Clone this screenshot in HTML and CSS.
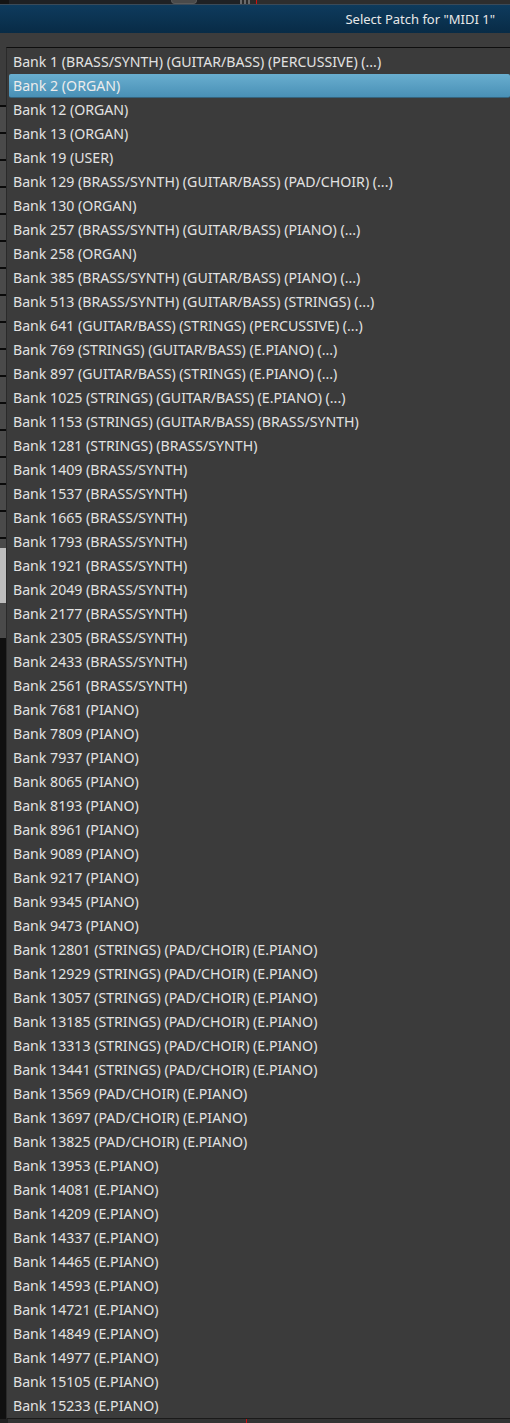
FILE: index.html
```html
<!DOCTYPE html>
<html>
<head>
<meta charset="utf-8">
<link rel="stylesheet" href="styles.css">
</head>
<body>
<div class="topstrip">
  <div class="ts-left"></div>
  <div class="ts-pill"></div>
  <div class="ts-mid"></div>
  <div class="ts-lines"><span></span><span></span><span></span></div>
  <div class="ts-red"></div>
  <div class="ts-right"></div>
</div>
<div class="titlebar"><span class="title">Select Patch for "MIDI 1"</span></div>
<div class="workspace">
  <div class="tracks"></div>
  <div class="menu">
    <div class="item">Bank 1 (BRASS/SYNTH) (GUITAR/BASS) (PERCUSSIVE) (...)</div>
    <div class="item active">Bank 2 (ORGAN)</div>
    <div class="item">Bank 12 (ORGAN)</div>
    <div class="item">Bank 13 (ORGAN)</div>
    <div class="item">Bank 19 (USER)</div>
    <div class="item">Bank 129 (BRASS/SYNTH) (GUITAR/BASS) (PAD/CHOIR) (...)</div>
    <div class="item">Bank 130 (ORGAN)</div>
    <div class="item">Bank 257 (BRASS/SYNTH) (GUITAR/BASS) (PIANO) (...)</div>
    <div class="item">Bank 258 (ORGAN)</div>
    <div class="item">Bank 385 (BRASS/SYNTH) (GUITAR/BASS) (PIANO) (...)</div>
    <div class="item">Bank 513 (BRASS/SYNTH) (GUITAR/BASS) (STRINGS) (...)</div>
    <div class="item">Bank 641 (GUITAR/BASS) (STRINGS) (PERCUSSIVE) (...)</div>
    <div class="item">Bank 769 (STRINGS) (GUITAR/BASS) (E.PIANO) (...)</div>
    <div class="item">Bank 897 (GUITAR/BASS) (STRINGS) (E.PIANO) (...)</div>
    <div class="item">Bank 1025 (STRINGS) (GUITAR/BASS) (E.PIANO) (...)</div>
    <div class="item">Bank 1153 (STRINGS) (GUITAR/BASS) (BRASS/SYNTH)</div>
    <div class="item">Bank 1281 (STRINGS) (BRASS/SYNTH)</div>
    <div class="item">Bank 1409 (BRASS/SYNTH)</div>
    <div class="item">Bank 1537 (BRASS/SYNTH)</div>
    <div class="item">Bank 1665 (BRASS/SYNTH)</div>
    <div class="item">Bank 1793 (BRASS/SYNTH)</div>
    <div class="item">Bank 1921 (BRASS/SYNTH)</div>
    <div class="item">Bank 2049 (BRASS/SYNTH)</div>
    <div class="item">Bank 2177 (BRASS/SYNTH)</div>
    <div class="item">Bank 2305 (BRASS/SYNTH)</div>
    <div class="item">Bank 2433 (BRASS/SYNTH)</div>
    <div class="item">Bank 2561 (BRASS/SYNTH)</div>
    <div class="item">Bank 7681 (PIANO)</div>
    <div class="item">Bank 7809 (PIANO)</div>
    <div class="item">Bank 7937 (PIANO)</div>
    <div class="item">Bank 8065 (PIANO)</div>
    <div class="item">Bank 8193 (PIANO)</div>
    <div class="item">Bank 8961 (PIANO)</div>
    <div class="item">Bank 9089 (PIANO)</div>
    <div class="item">Bank 9217 (PIANO)</div>
    <div class="item">Bank 9345 (PIANO)</div>
    <div class="item">Bank 9473 (PIANO)</div>
    <div class="item">Bank 12801 (STRINGS) (PAD/CHOIR) (E.PIANO)</div>
    <div class="item">Bank 12929 (STRINGS) (PAD/CHOIR) (E.PIANO)</div>
    <div class="item">Bank 13057 (STRINGS) (PAD/CHOIR) (E.PIANO)</div>
    <div class="item">Bank 13185 (STRINGS) (PAD/CHOIR) (E.PIANO)</div>
    <div class="item">Bank 13313 (STRINGS) (PAD/CHOIR) (E.PIANO)</div>
    <div class="item">Bank 13441 (STRINGS) (PAD/CHOIR) (E.PIANO)</div>
    <div class="item">Bank 13569 (PAD/CHOIR) (E.PIANO)</div>
    <div class="item">Bank 13697 (PAD/CHOIR) (E.PIANO)</div>
    <div class="item">Bank 13825 (PAD/CHOIR) (E.PIANO)</div>
    <div class="item">Bank 13953 (E.PIANO)</div>
    <div class="item">Bank 14081 (E.PIANO)</div>
    <div class="item">Bank 14209 (E.PIANO)</div>
    <div class="item">Bank 14337 (E.PIANO)</div>
    <div class="item">Bank 14465 (E.PIANO)</div>
    <div class="item">Bank 14593 (E.PIANO)</div>
    <div class="item">Bank 14721 (E.PIANO)</div>
    <div class="item">Bank 14849 (E.PIANO)</div>
    <div class="item">Bank 14977 (E.PIANO)</div>
    <div class="item">Bank 15105 (E.PIANO)</div>
    <div class="item">Bank 15233 (E.PIANO)</div>
  </div>
</div>
<div class="bottomstrip">
  <div class="bs-left"></div>
  <div class="bs-red"></div>
  <div class="bs-right"></div>
</div>
</body>
</html>
```

FILE: styles.css
```css
html, body {
  margin: 0;
  padding: 0;
  background: #3c3c3c;
  width: 510px;
  height: 1423px;
  overflow: hidden;
  font-family: "Noto Sans", "DejaVu Sans", sans-serif;
}

.topstrip {
  display: flex;
  height: 4px;
  background: #1f2124;
  border-bottom: 1px solid #3a4a58;
}
.ts-left { width: 9px; background: #141414; }
.ts-pill {
  margin-left: 162px;
  width: 24px;
  height: 3px;
  background: #4a4a4a;
  border-radius: 0 0 4px 4px;
  border: 1px solid #5a5a5a;
  border-top: none;
}
.ts-mid { width: 43px; }
.ts-lines { display: flex; gap: 2px; width: 16px; background: #2a2a2a; }
.ts-lines span { width: 2px; background: #6a6a6a; }
.ts-red { width: 1px; background: #d01010; }
.ts-right { flex: 1; background: #2e2e2e; }

.titlebar {
  height: 28px;
  background: linear-gradient(#0e3b5d, #082b46);
  display: flex;
  align-items: center;
  justify-content: flex-end;
  padding-right: 15px;
}
.title {
  color: #e8e8e8;
  font-size: 13px;
}

.workspace {
  display: flex;
  padding-top: 14px;
  height: 1372px;
}
.tracks {
  width: 6px;
  flex: none;
  margin-top: -14px;
  background:
    linear-gradient(#bdbdbd, #bdbdbd) 0 515px / 6px 55px no-repeat,
    linear-gradient(#4a4a4a, #4a4a4a) 0 570px / 6px 35px no-repeat,
    linear-gradient(#101010, #101010) 0 605px / 6px 800px no-repeat,
    repeating-linear-gradient(#0a0a0a 0 2px, #4a4a4a 2px 27px) 0 72px / 6px 443px no-repeat,
    #3c3c3c;
}

.menu {
  flex: 1;
  background: #3b3b3b;
  border-top: 1px solid #0e0e0e;
  border-left: 1px solid #2a2a2a;
  border-bottom: 1px solid #1a1a1a;
  padding: 2px 0 0 2px;
  box-sizing: border-box;
  height: 1372px;
}
.item {
  height: 24px;
  line-height: 24px;
  padding-left: 4px;
  font-size: 14.15px;
  color: #e2e2e2;
  white-space: nowrap;
  box-sizing: border-box;
}
.item.active {
  background: linear-gradient(#69aecf, #4990b6);
  border-bottom: 1px solid #35647e;
  border-radius: 2px;
  line-height: 23px;
  color: #ececec;
}

.bottomstrip {
  display: flex;
  height: 4px;
  background: #333;
}
.bs-left { width: 8px; background: #222; }
.bs-red { margin-left: 238px; width: 1px; background: #d01010; }
.bs-right { flex: 1; }
```
